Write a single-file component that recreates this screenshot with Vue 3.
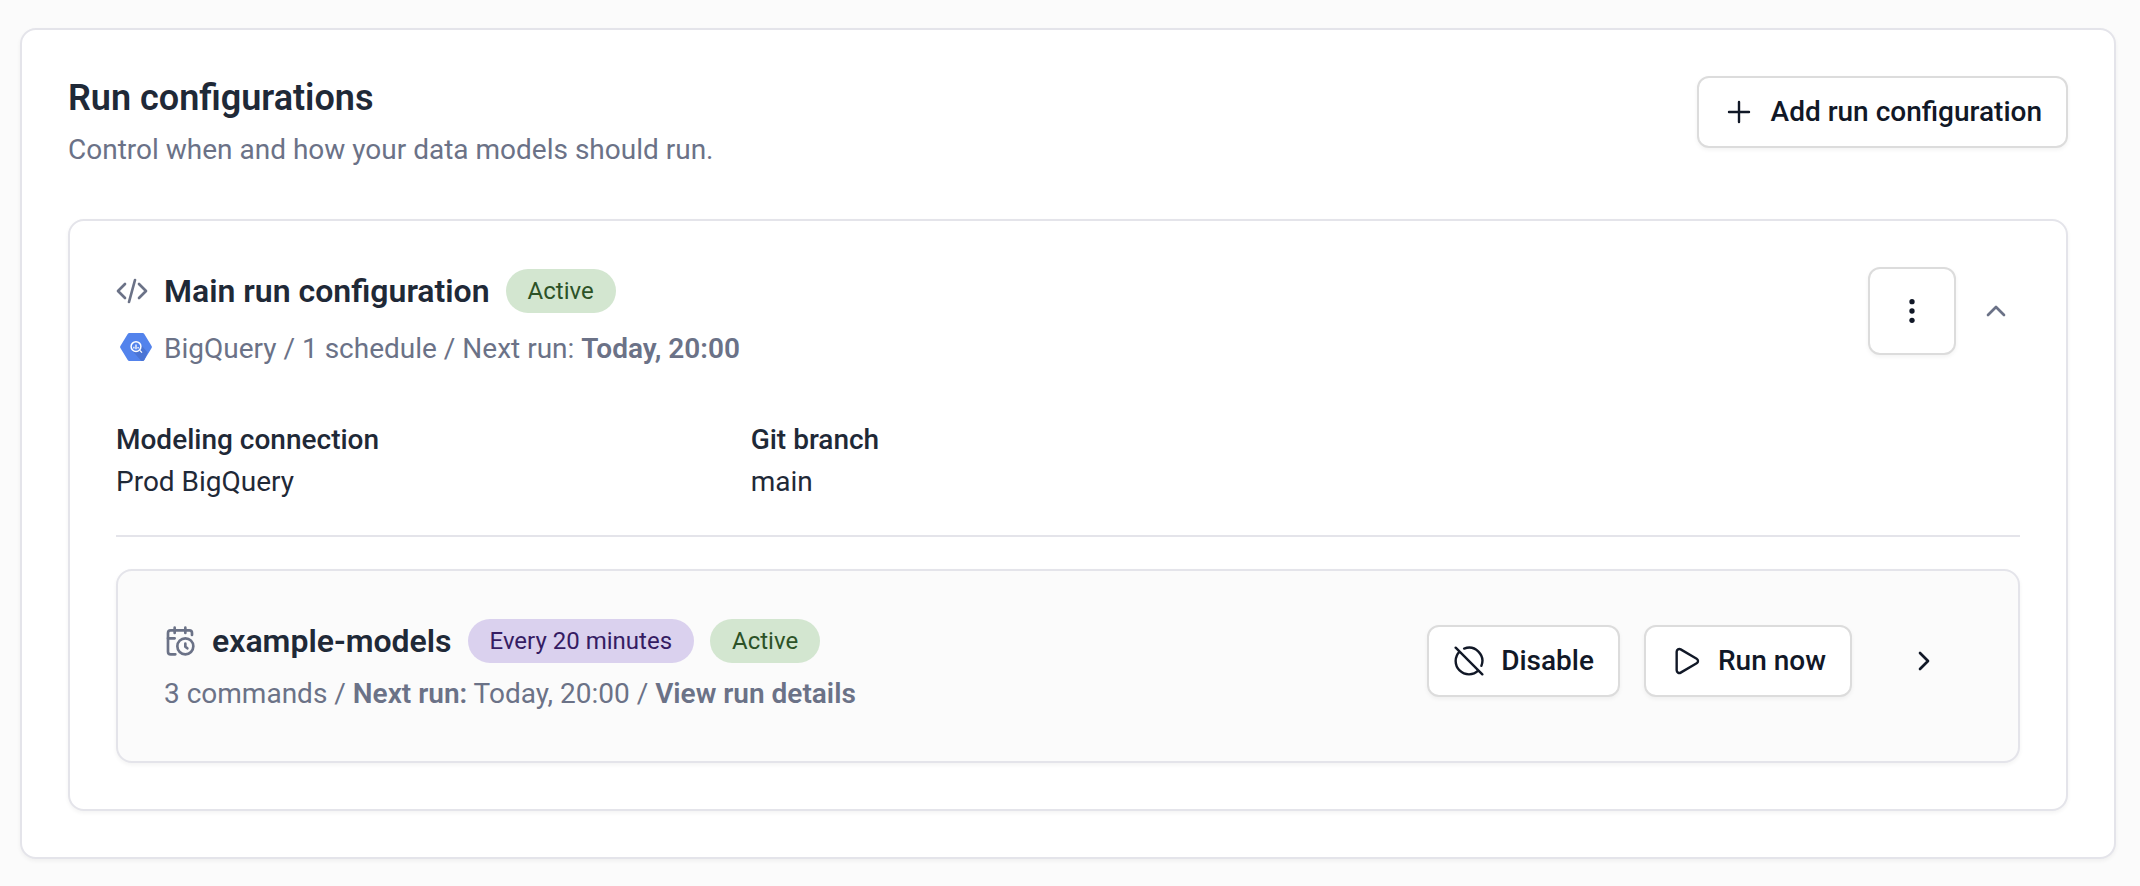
<template>
  <main class="page">
    <section class="panel">
      <header class="panel-header">
        <div>
          <h1 class="panel-title">Run configurations</h1>
          <p class="panel-description">Control when and how your data models should run.</p>
        </div>
        <button type="button" class="btn">
          <svg class="icon" viewBox="0 0 24 24" aria-hidden="true">
            <path d="M12 4.5v15m7.5-7.5h-15" />
          </svg>
          Add run configuration
        </button>
      </header>

      <article class="panel config">
        <div class="config-header">
          <div class="config-summary">
            <div class="title-row">
              <svg class="icon muted bold" viewBox="0 0 24 24" aria-hidden="true">
                <path d="M17.25 6.75 22.5 12l-5.25 5.25m-10.5 0L1.5 12l5.25-5.25m7.5-3-4.5 16.5" />
              </svg>
              <h2 class="config-title">{{ config.name }}</h2>
              <span class="badge badge-green">Active</span>
            </div>
            <div class="meta-row">
              <svg class="warehouse-icon" viewBox="0 0 32 28" aria-hidden="true">
                <path d="M9.4 0h13.2a2 2 0 0 1 1.7 1l7.3 12a2 2 0 0 1 0 2l-7.3 12a2 2 0 0 1-1.7 1H9.4a2 2 0 0 1-1.7-1L.4 15a2 2 0 0 1 0-2L7.7 1a2 2 0 0 1 1.7-1z" fill="#5383ec" />
                <path d="M19.5 10 27.6 19.5 24.3 27a2 2 0 0 1-1.7 1h-1.2L12.5 18z" fill="#4a74d4" />
                <circle cx="16" cy="13.6" r="4.9" fill="#5383ec" stroke="#fff" stroke-width="1.5" />
                <path d="M13.9 13.8v1.6M16 11.4v4.8M18.1 14v1.4M19.8 17.4l2.2 2.2" fill="none" stroke="#fff" stroke-width="1.3" />
              </svg>
              <p class="meta">
                {{ config.warehouse }} / 1 schedule / Next run: <strong>{{ config.nextRun }}</strong>
              </p>
            </div>
          </div>
          <div class="config-actions">
            <button type="button" class="btn btn-square" aria-label="More options">
              <svg class="icon dots" viewBox="0 0 24 24" aria-hidden="true">
                <circle cx="12" cy="5" r="2" />
                <circle cx="12" cy="12" r="2" />
                <circle cx="12" cy="19" r="2" />
              </svg>
            </button>
            <button
              type="button"
              class="toggle"
              :aria-expanded="expanded"
              aria-label="Toggle configuration"
              @click="expanded = !expanded"
            >
              <svg class="icon bold" :class="{ flipped: !expanded }" viewBox="0 0 24 24" aria-hidden="true">
                <path d="m18 15-6-6-6 6" />
              </svg>
            </button>
          </div>
        </div>

        <template v-if="expanded">
          <dl class="details">
            <div v-for="item in config.details" :key="item.label">
              <dt>{{ item.label }}</dt>
              <dd>{{ item.value }}</dd>
            </div>
          </dl>

          <section v-for="job in config.schedules" :key="job.name" class="panel schedule">
            <div class="schedule-summary">
              <div class="title-row">
                <svg class="icon muted bold" viewBox="0 0 24 24" aria-hidden="true">
                  <path d="M21 7.5V6a2 2 0 0 0-2-2H5a2 2 0 0 0-2 2v14a2 2 0 0 0 2 2h3.5" />
                  <path d="M16 2v4M8 2v4M3 10h5M17.5 17.5 16 16.3V14" />
                  <circle cx="16" cy="16" r="6" />
                </svg>
                <h3 class="config-title">{{ job.name }}</h3>
                <span class="badge badge-purple">{{ job.interval }}</span>
                <span class="badge badge-green">Active</span>
              </div>
              <p class="meta">
                {{ job.commands }} commands / <strong>Next run:</strong> {{ job.nextRun }} /
                <a href="#">View run details</a>
              </p>
            </div>
            <div class="schedule-actions">
              <button type="button" class="btn">
                <svg class="icon" viewBox="0 0 24 24" aria-hidden="true">
                  <path d="m2 2 20 20M8.35 2.69A10 10 0 0 1 21.3 15.65M19.08 19.08A10 10 0 1 1 4.92 4.92" />
                </svg>
                Disable
              </button>
              <button type="button" class="btn">
                <svg class="icon" viewBox="0 0 24 24" aria-hidden="true">
                  <path d="M5 5a2 2 0 0 1 3.008-1.728l11.997 6.998a2 2 0 0 1 .003 3.458l-12 7A2 2 0 0 1 5 19z" />
                </svg>
                Run now
              </button>
              <button type="button" class="open" aria-label="Open schedule">
                <svg class="icon bold" viewBox="0 0 24 24" aria-hidden="true">
                  <path d="m9 18 6-6-6-6" />
                </svg>
              </button>
            </div>
          </section>
        </template>
      </article>
    </section>
  </main>
</template>

<script setup>
import { reactive, ref } from 'vue';

const expanded = ref(true);

const config = reactive({
  name: 'Main run configuration',
  warehouse: 'BigQuery',
  nextRun: 'Today, 20:00',
  details: [
    { label: 'Modeling connection', value: 'Prod BigQuery' },
    { label: 'Git branch', value: 'main' },
  ],
  schedules: [
    { name: 'example-models', interval: 'Every 20 minutes', commands: 3, nextRun: 'Today, 20:00' },
  ],
});
</script>

<style>
body {
  margin: 0;
  background-color: #fbfbfb;
}
</style>

<style scoped>
.page {
  padding: 28px 24px 24px 20px;
  font-family: Roboto, sans-serif;
  font-size: 28px;
  line-height: 42px;
  color: #1f2937;
}

h1,
h2,
h3,
p,
dl,
dd {
  margin: 0;
}

.panel {
  padding: 46px;
  border: 2px solid #e4e4ea;
  border-radius: 16px;
  background-color: #fff;
  box-shadow: 0 2px 4px rgba(0, 0, 0, 0.05);
}

.panel-header,
.config-header,
.schedule {
  display: flex;
  justify-content: space-between;
  align-items: flex-start;
}

.panel-title {
  font-size: 36px;
  line-height: 44px;
  font-weight: 600;
}

.panel-description {
  margin-top: 9px;
  color: #6b7287;
}

.config {
  margin-top: 48px;
}

.config-summary {
  padding-top: 2px;
}

.title-row {
  display: flex;
  align-items: center;
  gap: 16px;
}

.config-title {
  font-size: 32px;
  line-height: 44px;
  font-weight: 600;
}

.badge {
  padding: 0 22px;
  border-radius: 22px;
  font-size: 24px;
  line-height: 44px;
}

.badge-green {
  background-color: #d3e6d0;
  color: #2c5227;
}

.badge-purple {
  background-color: #dad1ee;
  color: #351c63;
}

.meta-row {
  display: flex;
  align-items: flex-start;
  gap: 12px;
  margin-top: 15px;
}

.warehouse-icon {
  width: 32px;
  height: 28px;
  margin: 5px 0 0 4px;
}

.meta {
  color: #6b7287;
}

.meta strong,
.meta a {
  font-weight: 600;
  color: inherit;
  text-decoration: none;
}

.meta a:hover {
  text-decoration: underline;
}

.config-actions {
  display: flex;
  align-items: center;
  gap: 16px;
}

.btn {
  display: inline-flex;
  align-items: center;
  gap: 16px;
  padding: 13px 24px;
  border: 2px solid #dcdcdc;
  border-radius: 12px;
  background-color: #fff;
  box-shadow: 0 2px 4px rgba(0, 0, 0, 0.05);
  color: #111827;
  font: inherit;
  font-weight: 500;
  cursor: pointer;
}

.btn:hover {
  background-color: #f9fafb;
}

.btn-square {
  padding: 26px;
}

.toggle,
.open {
  display: inline-flex;
  align-items: center;
  justify-content: center;
  width: 48px;
  height: 48px;
  padding: 0;
  border: none;
  background: none;
  color: #6b7287;
  cursor: pointer;
}

.open {
  width: 96px;
  height: 72px;
  color: #111827;
}

.icon {
  flex: none;
  width: 32px;
  height: 32px;
  fill: none;
  stroke: currentColor;
  stroke-width: 1.8;
  stroke-linecap: round;
  stroke-linejoin: round;
}

.bold {
  stroke-width: 2;
}

.muted {
  color: #6b7287;
}

.dots {
  fill: currentColor;
  stroke: none;
}

.flipped {
  transform: rotate(180deg);
}

.details {
  display: grid;
  grid-template-columns: repeat(3, 1fr);
  margin-top: 49px;
  padding-bottom: 32px;
  border-bottom: 2px solid #e4e4ea;
}

.details dt {
  font-weight: 500;
}

.schedule {
  margin-top: 32px;
  background-color: #fbfbfb;
}

.schedule-summary {
  padding-top: 2px;
}

.schedule-summary .meta {
  margin-top: 10px;
}

.schedule-actions {
  display: flex;
  align-items: center;
  gap: 24px;
  padding-top: 8px;
}
</style>
